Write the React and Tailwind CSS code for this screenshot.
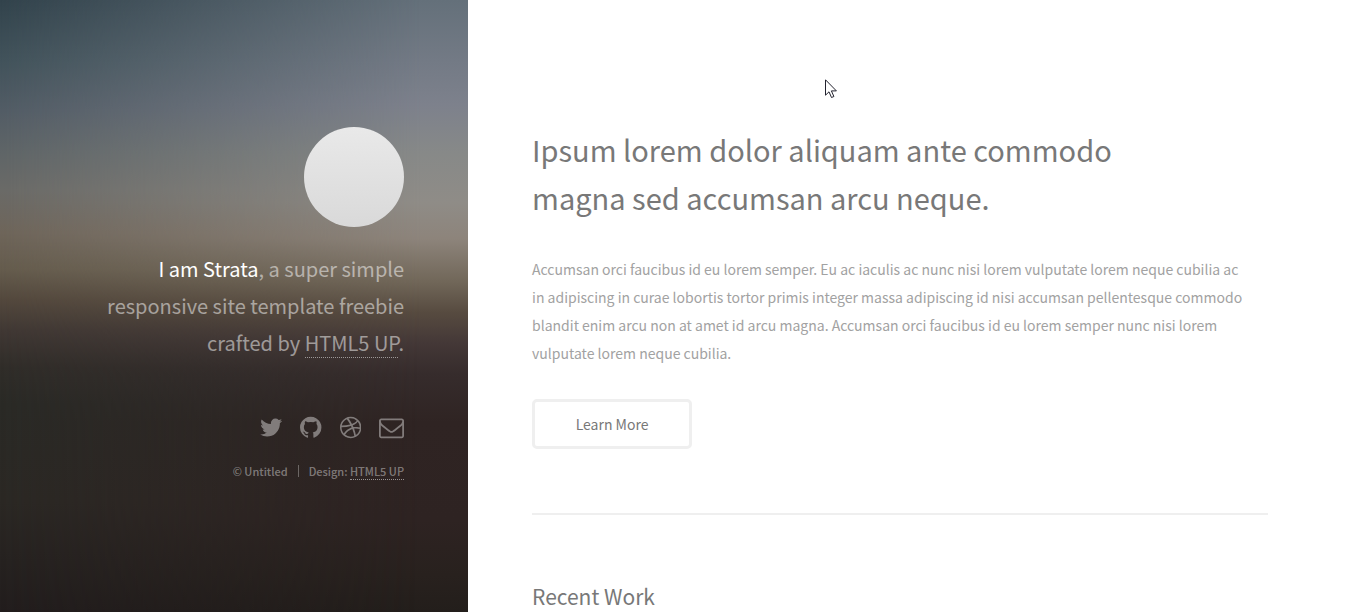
/**
 * App.jsx
 *
 * Strata landing page: intro sidebar on the left, page content on the right.
 */

const socialLinks = [
  {
    label: 'Twitter',
    viewBox: '96 0 1600 1792',
    path: 'M1684 408q-67 98-162 167 1 14 1 42 0 130-38 259.500t-115.500 248.500-184.500 210.500-258 146-323 54.500q-271 0-496-145 35 4 78 4 225 0 401-138-105-2-188-64.500t-114-159.500q33 5 61 5 43 0 85-11-112-23-185.500-111.500t-73.500-205.500v-4q68 38 146 41-66-44-105-115t-39-154q0-88 44-163 121 149 294.500 238.500t371.500 99.500q-8-38-8-74 0-134 94.500-228.500t228.500-94.500q140 0 236 102 109-21 205-78-37 115-142 178 93-10 186-50z',
  },
  {
    label: 'Github',
    viewBox: '128 0 1536 1792',
    path: 'M896 128q209 0 385.500 103t279.500 279.500 103 385.500q0 251-146.500 451.500t-378.500 277.500q-27 5-40-7t-13-30q0-3 .5-76.500t.5-134.500q0-97-52-142 57-6 102.500-18t94-39 81-66.500 53-105 20.500-150.500q0-119-79-206 37-91-8-204-28-9-81 11t-92 44l-38 24q-93-26-192-26t-192 26q-16-11-42.500-27t-83.500-38.500-85-13.500q-45 113-8 204-79 87-79 206 0 85 20.500 150t52.500 105 80.500 67 94 39 102.500 18q-39 36-49 103-21 10-45 15t-57 5-65.500-21.500-55.500-62.500q-19-32-48.500-52t-49.500-24l-20-3q-21 0-29 4.500t-5 11.500 9 14 13 12l7 5q22 10 43.500 38t31.500 51l10 23q13 38 44 61.500t67 30 69.500 7 55.500-3.500l23-4q0 38 .5 88.500t.5 54.500q0 18-13 30t-40 7q-232-77-378.500-277.500t-146.500-451.500q0-209 103-385.500t279.500-279.500 385.500-103z',
  },
  {
    label: 'Dribbble',
    viewBox: '128 0 1536 1792',
    path: 'M1152 1500q-42-241-140-498h-2l-2 1q-16 6-43 16.500t-101 49-137 82-131 114.500-103 148l-15-11q184 150 418 150 132 0 256-52zm-185-607q-21-49-53-111-311 93-673 93-1 7-1 21 0 124 44 236.500t124 201.500q50-89 123.500-166.500t142.500-124.500 130.500-81 99.500-48l37-13q4-1 13-3.500t13-4.500zm-107-212q-120-213-244-378-138 65-234 186t-128 272q302 0 606-80zm684 319q-210-60-409-29 87 239 128 469 111-75 185-189.500t96-250.500zm-805-741q-1 0-2 1 1-1 2-1zm590 145q-185-164-433-164-76 0-155 19 131 170 246 382 69-26 130-60.500t96.500-61.500 65.500-57 37.500-40.500zm223 485q-3-232-149-410l-1 1q-9 12-19 24.500t-43.500 44.500-71 60.500-100 65-131.500 64.500q25 53 44 95 2 5 6.500 17t7.500 17q36-5 74.500-7t73.500-2 69 1.500 64 4 56.500 5.500 48 6.500 36.500 6 25 4.500zm112 7q0 209-103 385.500t-279.500 279.500-385.500 103-385.500-103-279.500-279.500-103-385.500 103-385.500 279.500-279.500 385.500-103 385.500 103 279.500 279.500 103 385.500z',
  },
  {
    label: 'Email',
    viewBox: '0 0 1792 1792',
    path: 'M1664 1504v-768q-32 36-69 66-268 206-426 338-51 43-83 67t-86.500 48.500-102.500 24.500h-2q-48 0-102.500-24.500t-86.500-48.500-83-67q-158-132-426-338-37-30-69-66v768q0 13 9.500 22.500t22.500 9.500h1472q13 0 22.500-9.500t9.500-22.500zm0-1051v-24.500l-.5-13-3-12.500-5.500-9-9-7.500-14-2.500h-1472q-13 0-22.500 9.500t-9.500 22.500q0 168 147 284 193 152 401 317 6 5 35 29.500t46 37.500 44.500 31.500 50.500 27.500 43 9h2q20 0 43-9t50.500-27.500 44.500-31.500 46-37.500 35-29.500q208-165 401-317 54-43 100.500-115.500t46.500-131.500zm128-37v1088q0 66-47 113t-113 47h-1472q-66 0-113-47t-47-113v-1088q0-66 47-113t113-47h1472q66 0 113 47t47 113z',
  },
]

function Sidebar() {
  return (
    <header className="relative isolate w-[34.8%] shrink-0 px-16 pt-[127px] text-right bg-[linear-gradient(to_bottom,#32434c_0%,#42535b_10%,#525c65_18%,#5f6567_25%,#6a6a67_31%,#6e655a_38%,#655c4d_44%,#53483d_49%,#403834_54%,#302d29_60%,#2a2a26_66%,#2b2824_82%,#221d1d_100%)]">
      {/* lighter sky that fades in towards the right edge */}
      <div className="absolute inset-0 -z-10 bg-[linear-gradient(to_bottom,#64707a_0%,#737a85_10%,#7d818c_17%,#878988_25%,#8f8c87_33%,#8d847b_39%,#716759_46%,#574b40_51%,#443837_56%,#362c2c_61%,#2f2423_69%,#2e2322_85%,#28211e_94%,#231e1b_100%)] [mask-image:linear-gradient(to_right,transparent,black_90%)]" />
      <a href="#" aria-label="Strata" className="inline-block align-top size-[100px] rounded-full bg-linear-to-b from-[#e9e9e9] to-[#d9d9d9]" />
      <h1 className="mt-[23px] text-[20px] leading-[37px] text-white/50">
        <strong className="font-normal text-white">I am Strata</strong>, a super simple<br />
        responsive site template freebie<br />
        crafted by <a href="#" className="border-b border-dotted border-white/50">HTML5 UP</a>.
      </h1>
      <ul className="mt-[54px] flex justify-end gap-[18px] text-white/40">
        {socialLinks.map((link) => (
          <li key={link.label}>
            <a href="#" aria-label={link.label}>
              <svg viewBox={link.viewBox} className="h-[25px] w-auto fill-current">
                <path d={link.path} />
              </svg>
            </a>
          </li>
        ))}
      </ul>
      <ul className="mt-5 flex justify-end text-[11px] leading-[22px] font-medium text-white/40">
        <li>© Untitled</li>
        <li className="mx-[10px] my-[5px] border-l border-white/30" />
        <li>Design: <a href="#" className="border-b border-dotted border-white/50">HTML5 UP</a></li>
      </ul>
    </header>
  )
}

function Main() {
  return (
    <main className="max-w-[864px] flex-1 px-16 pt-[125px] text-[#a2a2a2]">
      <section className="border-b-2 border-[#efefef] pb-16">
        <h2 className="text-[29px] leading-[48px] text-[#787878]">
          Ipsum lorem dolor aliquam ante commodo<br />
          magna sed accumsan arcu neque.
        </h2>
        <p className="mt-[34px] text-[14px] leading-7">
          Accumsan orci faucibus id eu lorem semper. Eu ac iaculis ac nunc nisi lorem vulputate lorem neque cubilia ac<br />
          in adipiscing in curae lobortis tortor primis integer massa adipiscing id nisi accumsan pellentesque commodo<br />
          blandit enim arcu non at amet id arcu magna. Accumsan orci faucibus id eu lorem semper nunc nisi lorem<br />
          vulputate lorem neque cubilia.
        </p>
        <a href="#" className="mt-8 flex h-[50px] w-40 items-center justify-center rounded-[5px] border-3 border-[#efefef] text-[14px] text-[#787878]">
          Learn More
        </a>
      </section>
      <section className="pt-[63px]">
        <h2 className="text-[21px] leading-9 text-[#787878]">Recent Work</h2>
      </section>
    </main>
  )
}

export default function App() {
  return (
    <div className="relative flex h-screen overflow-hidden bg-white font-['Noto_Sans_CJK_SC',sans-serif]">
      <Sidebar />
      <Main />
      {/* mouse pointer */}
      <svg viewBox="0 0 12 20" className="absolute left-[825px] top-[79px] h-5 w-3">
        <path d="M.5 .8v15.400l3.500-3.400 2.500 5.700 2.400-1-2.500-5.600h5z" fill="#fff" stroke="#22222e" strokeWidth="1" />
      </svg>
    </div>
  )
}
